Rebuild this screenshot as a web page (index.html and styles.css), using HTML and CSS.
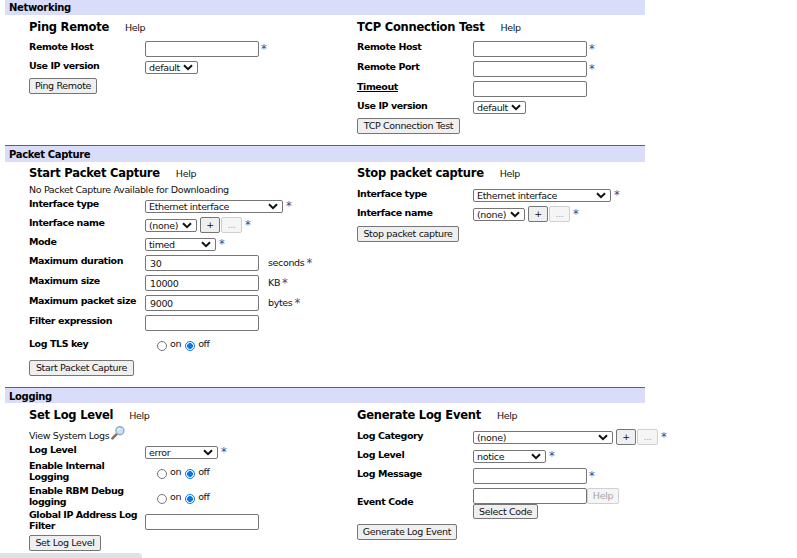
FILE: index.html
```html
<!DOCTYPE html>
<html lang="en">
<head>
<meta charset="utf-8">
<title>Troubleshooting</title>
<link rel="stylesheet" href="styles.css">
</head>
<body>
<svg class="defs" width="0" height="0"><symbol id="chev" viewBox="0 0 10 7"><path d="M1 1.2 5 5.2 9 1.2" fill="none" stroke="#111" stroke-width="2"/></symbol></svg>
<main class="page">
<section class="panel networking">
  <h1>Networking</h1>
  <div class="columns">
    <form>
      <header><h2>Ping Remote</h2><a>Help</a></header>
      <div class="row"><label>Remote Host</label><div class="control"><input type="text"><i>*</i></div></div>
      <div class="row pick"><label>Use IP version</label><div class="control"><span class="select w53"><span>default</span><svg><use href="#chev"/></svg></span></div></div>
      <button type="button" class="b68">Ping Remote</button>
    </form>
    <form>
      <header><h2>TCP Connection Test</h2><a>Help</a></header>
      <div class="row"><label>Remote Host</label><div class="control"><input type="text"><i>*</i></div></div>
      <div class="row"><label>Remote Port</label><div class="control"><input type="text"><i>*</i></div></div>
      <div class="row"><label><u>Timeout</u></label><div class="control"><input type="text"></div></div>
      <div class="row pick"><label>Use IP version</label><div class="control"><span class="select w53"><span>default</span><svg><use href="#chev"/></svg></span></div></div>
      <button type="button" class="b103">TCP Connection Test</button>
    </form>
  </div>
</section>
<section class="panel capture">
  <h1>Packet Capture</h1>
  <div class="columns">
    <form>
      <header><h2>Start Packet Capture</h2><a>Help</a></header>
      <p class="note">No Packet Capture Available for Downloading</p>
      <div class="row pick high"><label>Interface type</label><div class="control"><span class="select w138"><span>Ethernet interface</span><svg><use href="#chev"/></svg></span><i>*</i></div></div>
      <div class="row pick high"><label>Interface name</label><div class="control"><span class="select w52"><span>(none)</span><svg><use href="#chev"/></svg></span><button type="button" class="mini first">+</button><button type="button" class="mini" disabled>...</button><i>*</i></div></div>
      <div class="row pick high short"><label>Mode</label><div class="control"><span class="select w71"><span>timed</span><svg><use href="#chev"/></svg></span><i>*</i></div></div>
      <div class="row"><label>Maximum duration</label><div class="control"><input type="text" value="30"><span class="unit">seconds</span><i>*</i></div></div>
      <div class="row"><label>Maximum size</label><div class="control"><input type="text" value="10000"><span class="unit">KB</span><i>*</i></div></div>
      <div class="row"><label>Maximum packet size</label><div class="control"><input type="text" value="9000"><span class="unit">bytes</span><i>*</i></div></div>
      <div class="row"><label>Filter expression</label><div class="control"><input type="text"></div></div>
      <div class="row toggle single"><label>Log TLS key</label><div class="control"><b class="radio"></b><span>on</span><b class="radio on"></b><span>off</span></div></div>
      <button type="button" class="b105">Start Packet Capture</button>
    </form>
    <form class="stop">
      <header><h2>Stop packet capture</h2><a>Help</a></header>
      <div class="row pick"><label>Interface type</label><div class="control"><span class="select w138"><span>Ethernet interface</span><svg><use href="#chev"/></svg></span><i>*</i></div></div>
      <div class="row pick"><label>Interface name</label><div class="control"><span class="select w52"><span>(none)</span><svg><use href="#chev"/></svg></span><button type="button" class="mini first">+</button><button type="button" class="mini" disabled>...</button><i>*</i></div></div>
      <button type="button" class="b102">Stop packet capture</button>
    </form>
  </div>
</section>
<section class="panel logging">
  <h1>Logging</h1>
  <div class="columns">
    <form>
      <header><h2>Set Log Level</h2><a>Help</a></header>
      <p class="note logs">View System Logs<svg class="lens" viewBox="0 0 14 14"><path d="M1.4 12.4 5.4 8.4" stroke="#8a6a5c" stroke-width="2.6" stroke-linecap="round"/><circle cx="8.9" cy="4.8" r="4" fill="#c4e4fa" stroke="#93a9c2" stroke-width="1.4"/><path d="M6.6 4.6A2.5 2.5 0 0 1 9 2.4" stroke="#fff" fill="none"/></svg></p>
      <div class="row pick high level"><label>Log Level</label><div class="control"><span class="select w73"><span>error</span><svg><use href="#chev"/></svg></span><i>*</i></div></div>
      <div class="row toggle"><label>Enable Internal<br>Logging</label><div class="control"><b class="radio"></b><span>on</span><b class="radio on"></b><span>off</span></div></div>
      <div class="row toggle"><label>Enable RBM Debug<br>logging</label><div class="control"><b class="radio"></b><span>on</span><b class="radio on"></b><span>off</span></div></div>
      <div class="row filter"><label>Global IP Address Log<br>Filter</label><div class="control"><input type="text"></div></div>
      <button type="button" class="b72">Set Log Level</button>
    </form>
    <form class="generate">
      <header><h2>Generate Log Event</h2><a>Help</a></header>
      <div class="row pick"><label>Log Category</label><div class="control"><span class="select w140"><span>(none)</span><svg><use href="#chev"/></svg></span><button type="button" class="mini first">+</button><button type="button" class="mini" disabled>...</button><i>*</i></div></div>
      <div class="row pick short"><label>Log Level</label><div class="control"><span class="select w73"><span>notice</span><svg><use href="#chev"/></svg></span><i>*</i></div></div>
      <div class="row"><label>Log Message</label><div class="control"><input type="text"><i>*</i></div></div>
      <div class="row event"><label>Event Code</label><div><div class="control"><input type="text"><button type="button" class="b32" disabled>Help</button></div><button type="button" class="b65">Select Code</button></div></div>
      <button type="button" class="b100">Generate Log Event</button>
    </form>
  </div>
</section>
</main>
<div class="statusbar"></div>
</body>
</html>
```
FILE: styles.css
```css
* { box-sizing: border-box; }
html, body { height: 558px; overflow: hidden; }
body { margin: 0; background: #fff; color: #111; font: 9.5px/12px "DejaVu Sans", Verdana, sans-serif; letter-spacing: -.35px; }
.defs { position: absolute; }
.page { width: 640px; margin-left: 5px; height: 558px; }
.panel { height: 242px; border-top: 1px solid #5d6078; }
.panel.networking { height: 145px; border-top: 0; }
.panel.logging { height: 171px; }
h1 { margin: 0; padding-left: 4px; height: 16px; background: #d9ddf9; font-size: 10px; line-height: 17px; letter-spacing: -.34px; color: #000; }
.networking h1 { height: 15px; line-height: 15px; }
.logging h1 { height: 15px; }
.columns { display: grid; grid-template-columns: 328px 340px; padding-left: 24px; }
header { display: flex; align-items: center; height: 24px; gap: 16px; }
header a { padding-top: 1px; }
.capture header { height: 22px; }
.capture .stop header { height: 25px; padding-bottom: 3px; }
.stop > button { margin-top: 1px; }
.logging .generate header { height: 26px; padding-bottom: 2px; }
h2 { margin: 0; font-size: 11.5px; line-height: 16px; letter-spacing: -.24px; color: #000; white-space: nowrap; }
.note { margin: 0; height: 14px; line-height: 12px; white-space: nowrap; }
.note.logs { height: 17px; padding-top: 3px; display: flex; }
.lens { width: 14px; height: 14px; margin: -4px 0 0 2px; fill: none; }
.row { display: grid; grid-template-columns: 116px 1fr; height: 20px; align-items: start; }
.row.pick { height: 19px; }
.row.short { height: 17px; }
.generate .row.short { height: 18px; }
.row.level { height: 16px; }
label { font-weight: bold; font-size: 9.5px; line-height: 16px; letter-spacing: -.43px; color: #000; white-space: nowrap; }
.pick label { line-height: 14px; }
.high label { line-height: 12px; }
.control { display: flex; align-items: center; height: 16px; margin-top: 2px; white-space: nowrap; }
.pick .control { height: 16px; margin-top: 0; }
input { width: 114px; height: 16px; margin: 0; padding: 1px 4px 0; border: 1px solid #767676; border-radius: 2px; background: #fff; font: inherit; letter-spacing: inherit; color: inherit; }
i { font: 11.5px/12px "DejaVu Sans", sans-serif; color: #44448e; margin-left: 3px; height: 13px; }
input + i { margin-left: 2px; }
.unit + i { margin-left: 2px; }
.select { display: flex; align-items: center; justify-content: space-between; height: 13px; margin-top: 1px; padding: 1px 4px 0 3px; border: 1px solid #767676; border-radius: 2px; }
.select svg { width: 10px; height: 7px; margin-top: -1px; }
button { display: block; height: 16px; margin: 0; padding: 0; border: 1px solid #767676; border-radius: 2px; background: #efefef; color: #111; font: inherit; letter-spacing: inherit; text-align: center; white-space: nowrap; }
button:disabled { color: #a5a5a5; border-color: #d0d0d0; background: #f5f5f5; }
.mini { width: 21px; }
.mini.first { width: 20px; margin: 0 1px 0 3px; }
.unit { margin-left: 9px; }
.toggle { height: 25px; }
.toggle label, .filter label { line-height: 11px; }
.filter label { margin-top: -1px; }
.toggle .control { height: 25px; margin: 0; padding: 3px 0 0 12px; }
.toggle .control span { margin: -4px 4px 0 3px; }
.radio { width: 10px; height: 10px; border: 1px solid #767676; border-radius: 50%; }
.radio.on { border-color: #0b76e8; background: radial-gradient(circle, #0b76e8 0 2.6px, #fff 3.2px); }
.toggle.single { height: 27px; }
.single label { line-height: 22px; }
.single .control { height: 22px; }
.filter { height: 25px; }
.filter .control { margin-top: 4px; }
.event { height: 38px; }
.event label { line-height: 32px; }
.w52 { width: 52px; } .w53 { width: 53px; } .w71 { width: 71px; } .w73 { width: 73px; } .w138 { width: 138px; } .w140 { width: 140px; }
.b32 { width: 32px; } .b65 { width: 65px; height: 15px; } .b68 { width: 68px; } .b72 { width: 72px; } .b100 { width: 100px; } .b102 { width: 102px; } .b103 { width: 103px; } .b105 { width: 105px; }
.statusbar { position: absolute; left: 0; top: 553px; width: 142px; height: 5px; background: #dee1e6; border-top-right-radius: 4px; }
```
